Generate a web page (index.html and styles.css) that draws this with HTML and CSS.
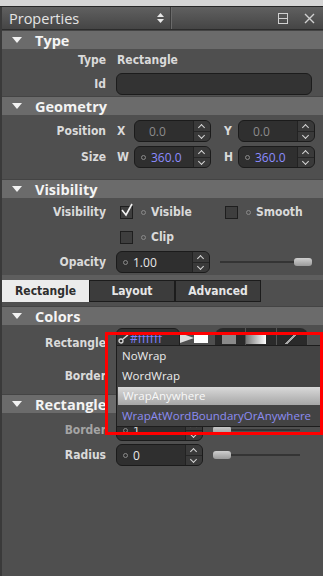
FILE: index.html
```html
<!DOCTYPE html>
<html lang="en">
<head>
  <meta charset="UTF-8">
  <meta name="viewport" content="width=device-width, initial-scale=1.0">
  <title>Properties</title>
  <link rel="stylesheet" href="styles.css">
</head>
<body>

  <div class="topstrip"></div>

  <div class="panel">
    <header class="titlebar">
      <span class="title">Properties</span>
      <svg class="sorter" width="7" height="10" viewBox="0 0 7 10"><path d="M3.5 0 L7 4 H0 Z M0 6 H7 L3.5 10 Z" fill="#e8e8e8"/></svg>
      <span class="sep"></span>
      <span class="spacer"></span>
      <svg class="float" width="10" height="11" viewBox="0 0 10 11"><rect x="0.5" y="0.5" width="9" height="10" fill="none" stroke="#d0d0d0"/><line x1="0" y1="5.5" x2="10" y2="5.5" stroke="#d0d0d0"/></svg>
      <svg class="close" width="11" height="11" viewBox="0 0 11 11"><path d="M1 1 L10 10 M10 1 L1 10" stroke="#d0d0d0" stroke-width="1.4"/></svg>
    </header>

    <section>
      <div class="head"><span class="tri"></span>Type</div>
      <div class="body type-body">
        <div class="row"><label>Type</label><span class="val">Rectangle</span></div>
        <div class="row"><label>Id</label><div class="field id-field"></div></div>
      </div>
    </section>

    <section>
      <div class="head"><span class="tri"></span>Geometry</div>
      <div class="body geo-body">
        <div class="row">
          <label>Position</label>
          <div class="pair">
            <span class="axis">X</span>
            <div class="spin xy"><span class="num dim">0.0</span><span class="arrows"><i class="up"></i><i class="down"></i></span></div>
            <span class="axis ax2">Y</span>
            <div class="spin xy"><span class="num dim">0.0</span><span class="arrows"><i class="up"></i><i class="down"></i></span></div>
          </div>
        </div>
        <div class="row">
          <label>Size</label>
          <div class="pair">
            <span class="axis">W</span>
            <div class="spin xy"><span class="dot"></span><span class="num blue">360.0</span><span class="arrows"><i class="up"></i><i class="down"></i></span></div>
            <span class="axis ax2">H</span>
            <div class="spin xy"><span class="dot"></span><span class="num blue">360.0</span><span class="arrows"><i class="up"></i><i class="down"></i></span></div>
          </div>
        </div>
      </div>
    </section>

    <section>
      <div class="head"><span class="tri"></span>Visibility</div>
      <div class="body vis-body">
        <div class="row">
          <label>Visibility</label>
          <div class="checks">
            <span class="check">
              <span class="box"><svg width="16" height="16" viewBox="0 0 16 16"><path d="M2 7 L6 12 L12 1" fill="none" stroke="#f2f2f2" stroke-width="1.6"/></svg></span>
              <span class="dot"></span><span class="ctext">Visible</span>
            </span>
            <span class="check">
              <span class="box"></span>
              <span class="dot"></span><span class="ctext">Smooth</span>
            </span>
          </div>
        </div>
        <div class="row">
          <label></label>
          <span class="check">
            <span class="box"></span>
            <span class="dot"></span><span class="ctext">Clip</span>
          </span>
        </div>
        <div class="row">
          <label>Opacity</label>
          <div class="slide-row">
            <div class="spin opacity"><span class="dot"></span><span class="num">1.00</span><span class="arrows"><i class="up"></i><i class="down"></i></span></div>
            <div class="slider"><span class="handle right"></span></div>
          </div>
        </div>
      </div>
    </section>

    <nav class="tabs">
      <span class="tab active">Rectangle</span>
      <span class="tab">Layout</span>
      <span class="tab">Advanced</span>
    </nav>

    <section>
      <div class="head"><span class="tri"></span>Colors</div>
      <div class="body colors-body">
        <div class="row color-row">
          <label>Rectangle</label>
          <div class="color-edit">
            <div class="hexfield">
              <svg width="11" height="9" viewBox="0 0 11 9"><circle cx="3" cy="6" r="2" fill="none" stroke="#d8d8d8" stroke-width="1.3"/><path d="M5 4 L10 0" stroke="#d8d8d8" stroke-width="1.5"/></svg>
              <span class="hex">#ffffff</span>
            </div>
            <span class="swatch play"></span><span class="swatch white"></span>
            <div class="modes">
              <span class="mode"><i class="solid"></i></span>
              <span class="mode"><i class="grad"></i></span>
              <span class="mode"><i class="none"></i></span>
            </div>
          </div>
        </div>
        <div class="row color-row">
          <label>Border</label>
          <div class="color-edit"></div>
        </div>
      </div>
    </section>

    <section>
      <div class="head"><span class="tri"></span>Rectangle</div>
      <div class="body rect-body">
        <div class="row">
          <label class="muted">Border</label>
          <div class="slide-row">
            <div class="spin short"><span class="dot"></span><span class="num">1</span><span class="arrows"><i class="up"></i><i class="down"></i></span></div>
            <div class="slider short-slider"><span class="handle left"></span></div>
          </div>
        </div>
        <div class="row">
          <label>Radius</label>
          <div class="slide-row">
            <div class="spin short"><span class="dot"></span><span class="num">0</span><span class="arrows"><i class="up"></i><i class="down"></i></span></div>
            <div class="slider short-slider"><span class="handle left"></span></div>
          </div>
        </div>
      </div>
    </section>

    <ul class="popup">
      <li>NoWrap</li>
      <li>WordWrap</li>
      <li class="hl">WrapAnywhere</li>
      <li class="cur">WrapAtWordBoundaryOrAnywhere</li>
    </ul>
    <div class="marker"></div>
  </div>

</body>
</html>
```

FILE: styles.css
```css
body {
  margin: 0;
  background-color: #4f4f4f;
  font-family: "Liberation Sans Narrow", "DejaVu Sans Condensed", sans-serif;
  overflow: hidden;
}
.topstrip {
  height: 6px;
  background-color: #d5d5d5;
  border-bottom: 1px solid #262626;
}
.panel {
  position: relative;
  min-height: 569px;
  border-left: 2px solid #3a3a3a;
  background-color: #4f4f4f;
}
.titlebar {
  height: 22px;
  display: flex;
  align-items: center;
  padding-left: 7px;
  background: linear-gradient(#606060, #454545);
  border-bottom: 1px solid #2c2c2c;
}
.title {
  font-family: "Open Sans", sans-serif;
  font-size: 14.5px;
  color: #e4e4e4;
  width: 148px;
}
.sep {
  width: 1px;
  height: 22px;
  margin-left: 6px;
  background-color: #3a3a3a;
  box-shadow: 1px 0 0 #6a6a6a;
}
.spacer {
  flex: 1;
}
.float {
  margin-right: 16px;
}
.close {
  margin-right: 8px;
}
.head {
  height: 18px;
  display: flex;
  align-items: center;
  background-color: #6b6b6b;
  border-top: 1px solid #444;
  color: #f4f4f4;
  font-family: "Open Sans", sans-serif;
  font-weight: bold;
  font-size: 14.5px;
}
.tri {
  width: 0;
  height: 0;
  margin: 0 13px 0 10px;
  border-left: 5px solid transparent;
  border-right: 5px solid transparent;
  border-top: 6px solid #f2f2f2;
}
.body {
  display: flex;
  flex-direction: column;
  gap: 2px;
}
.row {
  display: grid;
  grid-template-columns: 104px 1fr;
  column-gap: 10px;
  align-items: center;
  height: 22px;
}
.row label {
  text-align: right;
  font-weight: bold;
  font-size: 12px;
  color: #dadada;
}
.row label.muted {
  color: #a4a4a4;
}
.val {
  font-weight: bold;
  font-size: 12px;
  color: #dadada;
  padding-left: 1px;
}
.type-body {
  padding-bottom: 1px;
}
.field {
  height: 20px;
  border: 1px solid #1c1c1c;
  border-radius: 6px;
  background-color: #333;
}
.id-field {
  width: 194px;
}
.geo-body {
  padding: 5px 0 11px;
  gap: 4px;
}
.pair {
  display: flex;
  align-items: center;
}
.axis {
  width: 17px;
  font-weight: bold;
  font-size: 12px;
  color: #dadada;
  padding-left: 1px;
}
.axis.ax2 {
  width: 14px;
  margin-left: 12px;
}
.spin {
  height: 20px;
  display: flex;
  align-items: center;
  border: 1px solid #1b1b1b;
  border-radius: 6px;
  background-color: #2f2f2f;
  overflow: hidden;
  font-family: "Open Sans", sans-serif;
  font-size: 12px;
  color: #e8e8e8;
}
.spin.xy {
  width: 75px;
}
.spin .dot {
  margin-left: 6px;
}
.num {
  flex: 1;
  padding-left: 5px;
}
.num.dim {
  color: #8c8c8c;
  padding-left: 14px;
}
.num.blue {
  color: #8c8cff;
}
.arrows {
  width: 16px;
  height: 20px;
  display: flex;
  flex-direction: column;
  background-color: #3a3a3a;
  border-left: 1px solid #222;
}
.arrows i {
  flex: 1;
  position: relative;
}
.arrows .up {
  border-bottom: 1px solid #262626;
}
.arrows i::after {
  content: "";
  position: absolute;
  left: 5px;
  width: 4px;
  height: 4px;
  border-left: 1px solid #d6d6d6;
  border-top: 1px solid #d6d6d6;
}
.arrows .up::after {
  top: 4px;
  transform: rotate(45deg);
}
.arrows .down::after {
  top: 1px;
  transform: rotate(225deg);
}
.dot {
  width: 3px;
  height: 3px;
  border: 1px solid #8a8a8a;
  border-radius: 50%;
  flex: none;
}
.vis-body {
  padding: 3px 0 2px;
  gap: 3px;
}
.checks {
  display: flex;
}
.check {
  display: flex;
  align-items: center;
  padding-left: 4px;
}
.checks .check:first-child {
  width: 101px;
}
.box {
  width: 11px;
  height: 11px;
  border: 1px solid #1e1e1e;
  background-color: #3e3e3e;
  position: relative;
  margin-right: 8px;
}
.box svg {
  position: absolute;
  left: -1px;
  top: -4px;
}
.ctext {
  margin-left: 5px;
  font-weight: bold;
  font-size: 12px;
  color: #dadada;
}
.slide-row {
  display: flex;
  align-items: center;
}
.spin.opacity {
  width: 92px;
}
.spin.short {
  width: 85px;
}
.slider {
  position: relative;
  width: 92px;
  height: 2px;
  margin-left: 10px;
  background-color: #343434;
}
.short-slider {
  width: 87px;
}
.handle {
  position: absolute;
  top: -3px;
  width: 18px;
  height: 8px;
  border-radius: 3px;
  background: linear-gradient(#cfcfcf, #9a9a9a);
}
.handle.right {
  right: 0;
}
.handle.left {
  left: 0;
}
.tabs {
  display: flex;
  height: 22px;
  border-top: 5px solid #5e5e5e;
  margin-bottom: 4px;
}
.tab {
  width: 84px;
  display: flex;
  align-items: center;
  justify-content: center;
  background-color: #3c3c3c;
  border: 1px solid #1c1c1c;
  color: #e6e6e6;
  font-weight: bold;
  font-size: 12px;
}
.tab.active {
  width: 85px;
  background-color: #ececec;
  border-color: #ececec;
  color: #2e2e2e;
}
.colors-body {
  padding: 3px 0 3px;
  gap: 3px;
}
.color-row {
  height: 30px;
}
.color-edit {
  display: flex;
  align-items: flex-start;
  height: 30px;
}
.hexfield {
  width: 64px;
  height: 28px;
  display: flex;
  align-items: flex-start;
  padding-top: 4px;
  box-sizing: border-box;
  border: 1px solid #1e1e1e;
  border-radius: 6px;
  background-color: #333;
  gap: 1px;
}
.hexfield svg {
  margin: 2px 0 0 1px;
}
.hex {
  font-family: "Open Sans", sans-serif;
  font-size: 12px;
  line-height: 12px;
  color: #8080ff;
}
.swatch {
  margin-top: 5px;
  width: 14px;
  height: 10px;
}
.swatch.play {
  clip-path: polygon(0 0, 100% 50%, 0 100%);
  background-color: #dcdcdc;
}
.swatch.white {
  background-color: #fff;
}
.modes {
  display: flex;
  margin-left: 7px;
  height: 28px;
  border-radius: 8px 8px 0 0;
  background-color: #2a2a2a;
  overflow: hidden;
}
.mode {
  width: 30px;
  border-right: 1px solid #555;
  position: relative;
}
.mode i {
  position: absolute;
  top: 6px;
  left: 7px;
  width: 14px;
  height: 10px;
}
.mode .solid {
  background-color: #8a8a8a;
}
.mode .grad {
  left: 0;
  width: 20px;
  background: linear-gradient(90deg, #777, #fff);
}
.mode .none {
  background: linear-gradient(135deg, transparent 45%, #aaa 45%, #aaa 55%, transparent 55%);
}
.rect-body {
  padding-top: 6px;
  gap: 3px;
}
.popup {
  position: absolute;
  left: 114px;
  top: 338px;
  width: 210px;
  height: 80px;
  margin: 0;
  padding: 0;
  list-style: none;
  background-color: #434343;
  border: 1px solid #1d1d1d;
  font-family: "Open Sans", sans-serif;
  font-size: 11.5px;
  color: #ececec;
}
.popup li {
  height: 20px;
  line-height: 20px;
  padding-left: 5px;
}
.popup li.hl {
  background: linear-gradient(#d9d9d9, #a6a6a6);
  color: #f8f8f8;
  height: 18px;
  line-height: 18px;
  margin: 1px 0 1px 1px;
}
.popup li.cur {
  color: #8c8cf2;
}
.marker {
  position: absolute;
  left: 103px;
  top: 325px;
  width: 212px;
  height: 97px;
  border: 3px solid #ff0000;
}
```
